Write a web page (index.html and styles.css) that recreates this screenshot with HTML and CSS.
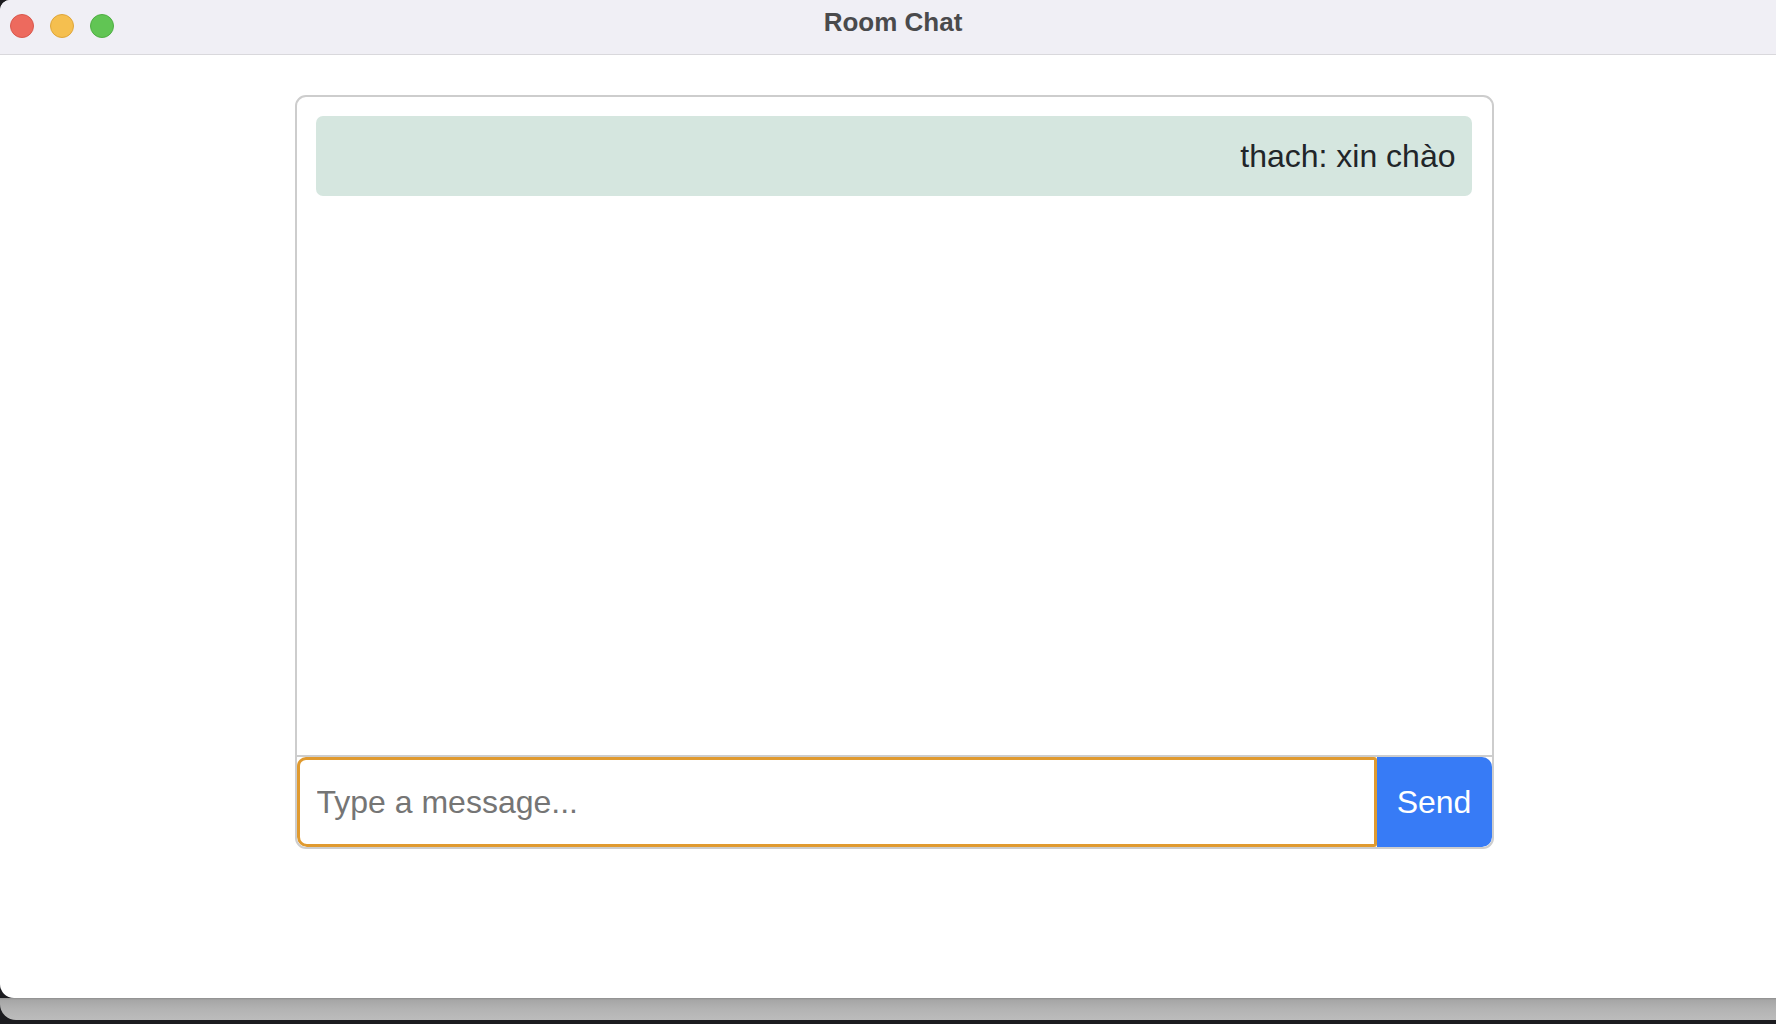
FILE: index.html
```html
<!DOCTYPE html>
<html lang="vi">
<head>
<meta charset="utf-8">
<title>Room Chat</title>
<link rel="stylesheet" href="styles.css">
</head>
<body>
<div class="stage">
  <div class="window">
    <header class="titlebar">
      <div class="lights">
        <span class="light red"></span>
        <span class="light yellow"></span>
        <span class="light green"></span>
      </div>
      <div class="title">Room Chat</div>
    </header>
    <main class="content">
      <section class="chat">
        <div class="messages">
          <div class="bubble">thach: xin chào</div>
        </div>
        <form class="composer">
          <input class="msg-input" type="text" placeholder="Type a message...">
          <button class="send" type="button">Send</button>
        </form>
      </section>
    </main>
  </div>
</div>
</body>
</html>
```

FILE: styles.css
```css
html, body {
  margin: 0;
  padding: 0;
  width: 1776px;
  height: 1024px;
  overflow: hidden;
  background: #1c1c20;
  font-family: "Liberation Sans", Arial, sans-serif;
}

.stage {
  width: 1788px;
  height: 1020px;
  background: linear-gradient(to bottom, #8e8e8e 0, #a6a6a6 2px, #b4b4b4 12px, #bcbcbc 22px);
  background-position: 0 998px;
  background-size: 100% 22px;
  background-repeat: no-repeat;
  border-radius: 0 0 0 16px;
  overflow: hidden;
}

.window {
  width: 1788px;
  height: 998px;
  background: #ffffff;
  border-radius: 10px 10px 0 14px;
  overflow: hidden;
  display: flex;
  flex-direction: column;
}

.titlebar {
  height: 54px;
  flex: 0 0 54px;
  background: #f0eff5;
  border-bottom: 1px solid #d9d8dc;
  display: flex;
  justify-content: center;
  align-items: flex-start;
  position: relative;
}

.lights {
  position: absolute;
  left: 10px;
  top: 14px;
  display: flex;
  gap: 16px;
}

.light {
  width: 24px;
  height: 24px;
  border-radius: 50%;
  box-sizing: border-box;
}
.red { background: #ed6a5e; border: 1px solid #d9584d; }
.yellow { background: #f5bf4f; border: 1px solid #dfa63a; }
.green { background: #61c554; border: 1px solid #4fae43; }

.title {
  margin-top: 9px;
  margin-right: 2px;
  font-size: 26px;
  line-height: 26px;
  font-weight: bold;
  color: #4a4a4c;
}

.content {
  flex: 1;
  display: flex;
  justify-content: center;
  padding-top: 40px;
}

.chat {
  width: 1199px;
  height: 754px;
  box-sizing: border-box;
  border: 2px solid #cdcdcd;
  border-radius: 11px;
  overflow: hidden;
  display: flex;
  flex-direction: column;
}

.messages {
  flex: 1;
  padding: 19px 20px 19px 19px;
}

.bubble {
  background: #d5e6df;
  border-radius: 7px;
  padding: 16px;
  font-size: 32px;
  line-height: 48px;
  color: #212529;
  text-align: right;
}

.composer {
  margin: 0;
  display: flex;
  height: 92px;
  border-top: 2px solid #cdcdcd;
  box-sizing: border-box;
}

.msg-input {
  flex: 1;
  min-width: 0;
  box-sizing: border-box;
  height: 90px;
  margin: 0;
  border: 3px solid #e09a2f;
  border-radius: 9px 3px 3px 10px;
  padding: 0 17px;
  font-family: "Liberation Sans", Arial, sans-serif;
  font-size: 32px;
  color: #212529;
  outline: none;
  background: #fff;
}

.msg-input::placeholder {
  color: #757575;
}

.send {
  width: 115px;
  height: 90px;
  margin: 0;
  border: none;
  background: #377bf6;
  color: #ffffff;
  font-family: "Liberation Sans", Arial, sans-serif;
  font-size: 32px;
  padding: 0 18px;
  border-radius: 0 10px 10px 0;
}
```
